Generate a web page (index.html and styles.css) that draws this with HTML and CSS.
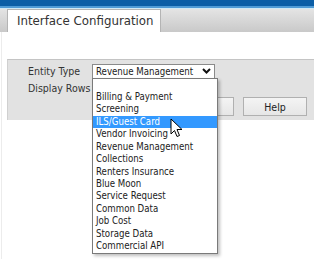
FILE: index.html
```html
<!DOCTYPE html>
<html lang="en">
<head>
  <meta charset="UTF-8">
  <title>Interface Configuration</title>
  <link rel="stylesheet" href="styles.css">
</head>
<body>
  <div class="topbar"></div>

  <!-- Tab strip -->
  <div class="tabs">
    <div class="tab">Interface Configuration</div>
  </div>

  <div class="content">
    <div class="panel">
      <div class="row">
        <span class="label">Entity Type</span>
        <div class="select-wrap">
          <div class="select">
            <span>Revenue Management</span>
            <svg class="caret" width="9" height="6" viewBox="0 0 9 6">
              <path d="M1 1 L4.5 4.5 L8 1" fill="none" stroke="#111" stroke-width="2"/>
            </svg>
          </div>
          <!-- open dropdown list -->
          <ul class="dropdown">
            <li>&nbsp;</li>
            <li>Billing &amp; Payment</li>
            <li>Screening</li>
            <li class="active">ILS/Guest Card</li>
            <li>Vendor Invoicing</li>
            <li>Revenue Management</li>
            <li>Collections</li>
            <li>Renters Insurance</li>
            <li>Blue Moon</li>
            <li>Service Request</li>
            <li>Common Data</li>
            <li>Job Cost</li>
            <li>Storage Data</li>
            <li>Commercial API</li>
          </ul>
          <svg class="cursor" width="13" height="20" viewBox="0 0 13 20">
            <path d="M1 1 L1 16 L4.5 12.5 L7 18.5 L9.5 17.5 L7 11.5 L12 11.5 Z" fill="#fff" stroke="#000" stroke-width="1" stroke-linejoin="round"/>
          </svg>
        </div>
      </div>
      <div class="row">
        <span class="label">Display Rows</span>
      </div>
      <div class="buttons">
        <button>Save</button>
        <button>Help</button>
      </div>
    </div>
  </div>
</body>
</html>
```

FILE: styles.css
```css
/* Page basics */
body {
  margin: 0;
  font-family: "DejaVu Sans Condensed", "DejaVu Sans", Verdana, sans-serif;
  font-size: 10.5px;
  color: #222;
  background-color: #fff;
}

.topbar {
  height: 6px;
  background-color: #0b5ea6;
  border-bottom: 2px solid #4f9bd6;
  box-shadow: 0 1px 0 #cfe9f5;
}

/* Tab strip */
.tabs {
  display: flex;
  height: 23px;
  margin-top: 1px;
  padding-left: 7px;
  background: linear-gradient(#e4e4e4, #c9c9c9);
}
.tab {
  display: flex;
  align-items: center;
  width: 154px;
  padding-left: 9px;
  box-sizing: border-box;
  background-color: #fff;
  border: 1px solid #b4b4b4;
  border-bottom: none;
  font-family: "DejaVu Sans", Verdana, sans-serif;
  font-size: 11.8px;
  color: #333;
}

.content {
  padding: 27px 0 0 5px;
  border-left: 1px solid #ececec;
  margin-left: 1px;
  height: 200px;
}

/* Gray settings panel */
.panel {
  position: relative;
  height: 57px;
  padding: 3px 0 0 20px;
  background-color: #e2e2e2;
  border-top: 1px solid #c4c4c4;
  border-left: 1px solid #d0d0d0;
}
.row {
  display: flex;
  align-items: center;
  height: 16px;
  margin-bottom: 1px;
}
.label {
  width: 64px;
  color: #333;
  white-space: nowrap;
}

/* Fake select */
.select-wrap {
  position: relative;
  font-size: 9.6px;
}
.select {
  display: flex;
  justify-content: space-between;
  align-items: center;
  width: 123px;
  height: 15px;
  padding: 0 3px 0 3px;
  box-sizing: border-box;
  background-color: #fff;
  border: 1px solid #8a8a8a;
  color: #222;
  white-space: nowrap;
}

.dropdown {
  position: absolute;
  left: 0;
  top: 14px;
  z-index: 2;
  width: 124px;
  margin: 0;
  padding: 0;
  list-style: none;
  background-color: #fff;
  border: 1px solid #7a7a7a;
  box-shadow: 2px 2px 3px rgba(0, 0, 0, 0.25);
}
.dropdown li {
  height: 12.45px;
  line-height: 12.45px;
  padding-left: 3px;
  white-space: nowrap;
}
.dropdown li.active {
  background-color: #3399ff;
  color: #fff;
}

.cursor {
  position: absolute;
  left: 78px;
  top: 54px;
  z-index: 3;
}

/* Buttons */
.buttons {
  position: absolute;
  top: 37px;
  left: 162px;
  display: flex;
  gap: 9px;
}
button {
  width: 64px;
  height: 19px;
  padding: 0;
  font-family: "DejaVu Sans Condensed", "DejaVu Sans", Verdana, sans-serif;
  font-size: 10.5px;
  color: #222;
  background: linear-gradient(#f4f4f4, #e6e6e6);
  border: 1px solid #b0b0b0;
}
```
